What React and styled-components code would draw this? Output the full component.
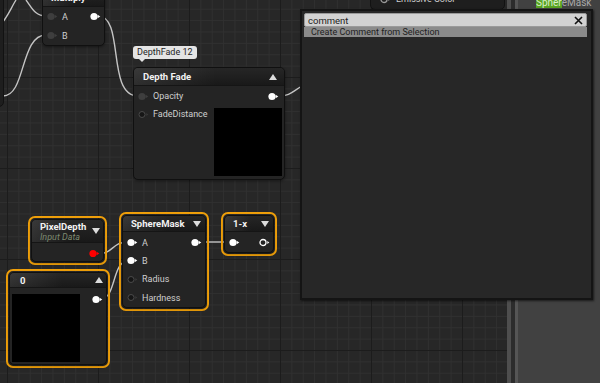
import React from "react";
import styled, { createGlobalStyle } from "styled-components";

const GlobalStyle = createGlobalStyle`
  html, body { margin: 0; padding: 0; background: #272727; overflow: hidden; }
  body { font-family: Roboto, "Liberation Sans", sans-serif; }
`;

const Screen = styled.div`
  position: relative;
  display: flex;
  width: 600px;
  height: 383px;
  overflow: hidden;
`;

const Graph = styled.div`
  position: relative;
  flex: none;
  width: 507px;
  height: 100%;
  overflow: hidden;
  background-color: #272727;
  background-image:
    linear-gradient(to right, #1c1c1c 1px, transparent 1px),
    linear-gradient(to bottom, #1c1c1c 1px, transparent 1px),
    linear-gradient(to right, #303030 1px, transparent 1px),
    linear-gradient(to bottom, #303030 1px, transparent 1px);
  background-size: 91px 91px, 91px 91px, 11.375px 11.375px, 11.375px 11.375px;
  background-position: 7px 77px, 7px 77px, 7px 77px, 7px 77px;
`;

const Splitter = styled.div`
  flex: none;
  width: 11px;
  background: linear-gradient(to right, #4e4e4e 0 4px, #2c2c2c 4px 8px, #555 8px 11px);
`;

const Panel = styled.div`
  flex: 1;
  background: #414141;
  padding-left: 18px;
`;

const PanelItem = styled.div`
  margin-top: -3px;
  font-size: 10px;
  line-height: 12px;
  color: #a8a8a8;
`;

const Match = styled.span`
  background: #58a222;
  color: #d8f0c8;
`;

const Wires = styled.svg`
  position: absolute;
  left: 0;
  top: 0;
  width: 507px;
  height: 383px;
  pointer-events: none;
`;

const NodeFrame = styled.div`
  position: absolute;
  left: ${(p) => p.$x}px;
  top: ${(p) => p.$y}px;
  width: ${(p) => p.$w}px;
  box-sizing: border-box;
  border-radius: 7px;
  padding: ${(p) => (p.$selected ? "1px" : "0")};
  border: ${(p) => (p.$selected ? "2px solid #f0a00a" : "none")};
`;

const NodeBody = styled.div`
  background: #242424;
  border: 1px solid #101010;
  border-radius: 5px;
  overflow: hidden;
  box-shadow: 0 1px 3px rgba(0, 0, 0, 0.45);
`;

const NodeHeader = styled.div`
  display: flex;
  align-items: center;
  justify-content: space-between;
  height: ${(p) => p.$h}px;
  padding: 0 ${(p) => p.$pr || 4}px 0 ${(p) => p.$pl || 8}px;
  background:
    linear-gradient(to right, rgba(255, 255, 255, 0.09), rgba(255, 255, 255, 0) 55%),
    linear-gradient(#262626, #191919);
  border-bottom: 1px solid #151515;
`;

const TitleBlock = styled.div`
  display: flex;
  flex-direction: column;
`;

const Title = styled.div`
  font-size: 9.5px;
  font-weight: bold;
  color: #f2f2f2;
  line-height: 11px;
`;

const Subtitle = styled.div`
  font-size: 9px;
  font-style: italic;
  color: #7d8a70;
  line-height: 10px;
`;

const Body = styled.div`
  display: flex;
  justify-content: space-between;
  padding: ${(p) => p.$pad || "0"};
`;

const PinColumn = styled.div`
  display: flex;
  flex-direction: column;
  align-items: ${(p) => (p.$right ? "flex-end" : "flex-start")};
`;

const PinRow = styled.div`
  display: flex;
  align-items: center;
  gap: 4px;
  height: ${(p) => p.$h || 18.3}px;
  padding: 0 ${(p) => (p.$right ? "3px" : "0")} 0 ${(p) => (p.$right ? "0" : "4px")};
`;

const PinLabel = styled.span`
  font-size: 9px;
  color: #cfcfcf;
  white-space: nowrap;
`;

const Preview = styled.div`
  width: 68px;
  height: 68px;
  background: #000;
  margin-top: ${(p) => p.$mt || 0}px;
`;

const Tooltip = styled.div`
  position: absolute;
  left: 133px;
  top: 46px;
  padding: 0 4px;
  height: 13px;
  line-height: 13px;
  border-radius: 3px;
  background: #e4e4e4;
  color: #1e1e1e;
  font-size: 9px;
  &::after {
    content: "";
    position: absolute;
    left: 6px;
    bottom: -3px;
    border-left: 3px solid transparent;
    border-right: 3px solid transparent;
    border-top: 3px solid #e4e4e4;
  }
`;

const EdgeNode = styled.div`
  position: absolute;
  left: ${(p) => p.$x}px;
  top: ${(p) => p.$y}px;
  width: ${(p) => p.$w}px;
  height: ${(p) => p.$h}px;
  background: #1e1e1e;
  border: 1px solid #121212;
  border-radius: 5px;
  display: flex;
  align-items: flex-end;
  gap: 5px;
  padding: 0 0 ${(p) => p.$pb || 0}px 9px;
  box-sizing: border-box;
`;

const Popup = styled.div`
  position: absolute;
  left: 300px;
  top: 9px;
  width: 293px;
  height: 291px;
  box-sizing: border-box;
  border: 2px solid #141414;
  background: #272727;
  padding: 2px 4px 0 2px;
  box-shadow: 1px 1px 2px rgba(0, 0, 0, 0.6);
  display: flex;
  flex-direction: column;
`;

const SearchBox = styled.div`
  display: flex;
  align-items: center;
  justify-content: space-between;
  height: 12px;
  padding: 0 3px 0 3px;
  background: #d2d2d2;
  border: 1px solid #9a9a9a;
  border-radius: 2px;
  font-size: 9.5px;
  color: #1e1e1e;
`;

const MenuItem = styled.div`
  height: 10px;
  line-height: 10px;
  padding-left: 7px;
  background: #8b8b8b;
  font-size: 9px;
  color: #1e1e1e;
`;

const Pin = ({ kind = "filled", color = "#ffffff" }) => {
  if (kind === "hollow") {
    return (
      <svg width="11" height="9" viewBox="0 0 11 9">
        <circle cx="4" cy="4.5" r="3" fill="#161616" stroke="#4a4a4a" strokeWidth="1" />
        <polygon points="8.3,3 10.3,4.5 8.3,6" fill="#3a3a3a" />
      </svg>
    );
  }
  if (kind === "ring") {
    return (
      <svg width="11" height="9" viewBox="0 0 11 9">
        <circle cx="4" cy="4.5" r="3" fill="none" stroke={color} strokeWidth="1.3" />
        <polygon points="8.3,3 10.3,4.5 8.3,6" fill={color} />
      </svg>
    );
  }
  return (
    <svg width="11" height="9" viewBox="0 0 11 9">
      <circle cx="4" cy="4.5" r="3.6" fill={color} />
      <polygon points="7.6,2.8 10.3,4.5 7.6,6.2" fill={color} />
    </svg>
  );
};

const Arrow = ({ up }) => (
  <svg width="8" height="6" viewBox="0 0 8 6">
    <polygon points={up ? "0,6 8,6 4,0" : "0,0 8,0 4,6"} fill="#dcdcdc" />
  </svg>
);

const Node = ({ x, y, w, selected, children }) => (
  <NodeFrame $x={x} $y={y} $w={w} $selected={selected}>
    <NodeBody>{children}</NodeBody>
  </NodeFrame>
);

const DIM = "#3e3e3e";

export default function App() {
  return (
    <Screen>
      <GlobalStyle />
      <Graph>
        <Wires viewBox="0 0 507 383">
          <g fill="none" stroke="#c4c4c4" strokeWidth="1.4">
            <path d="M0,25 C6,20 11,8 16,0" />
            <path d="M26,0 C32,8 35,16 46,16" />
            <path d="M3,96 C26,96 20,35 46,35" />
            <path d="M98,16 C125,16 106,96 138,96" />
            <path d="M279,96 C290,96 292,92 302,86" />
            <path d="M98,254 C113,254 112,242 128,242" />
            <path d="M101,299 C116,299 112,261 128,261" />
            <path d="M200,242 L230,242" />
          </g>
        </Wires>

        <EdgeNode $x={-100} $y={-20} $w={104} $h={127} />

        <EdgeNode $x={370} $y={-20} $w={135} $h={30} $pb={5}>
          <Pin kind="ring" color="#9a9a9a" />
          <PinLabel>Emissive Color</PinLabel>
        </EdgeNode>

        <Node x={42} y={-12} w={63}>
          <NodeHeader $h={17}>
            <Title>Multiply</Title>
          </NodeHeader>
          <Body>
            <PinColumn>
              <PinRow $h={19}>
                <Pin color={DIM} />
                <PinLabel>A</PinLabel>
              </PinRow>
              <PinRow $h={19}>
                <Pin color={DIM} />
                <PinLabel>B</PinLabel>
              </PinRow>
            </PinColumn>
            <PinColumn $right>
              <PinRow $right $h={19}>
                <Pin />
              </PinRow>
            </PinColumn>
          </Body>
        </Node>

        <Tooltip>DepthFade 12</Tooltip>

        <Node x={133} y={67} w={152}>
          <NodeHeader $h={17} $pl={9} $pr={7}>
            <Title>Depth Fade</Title>
            <Arrow up />
          </NodeHeader>
          <Body $pad="1px 2px 3px 0">
            <PinColumn>
              <PinRow $h={18}>
                <Pin color={DIM} />
                <PinLabel>Opacity</PinLabel>
              </PinRow>
              <PinRow $h={18}>
                <Pin kind="hollow" />
                <PinLabel>FadeDistance</PinLabel>
              </PinRow>
            </PinColumn>
            <PinColumn $right>
              <PinRow $right $h={18}>
                <Pin />
              </PinRow>
              <Preview $mt={3} />
            </PinColumn>
          </Body>
        </Node>

        <Node x={28} y={216} w={79} selected>
          <NodeHeader $h={22} $pr={3}>
            <TitleBlock>
              <Title>PixelDepth</Title>
              <Subtitle>Input Data</Subtitle>
            </TitleBlock>
            <Arrow />
          </NodeHeader>
          <Body $pad="2px 0 0 0">
            <span />
            <PinColumn $right>
              <PinRow $right $h={16}>
                <Pin color="#ff0000" />
              </PinRow>
            </PinColumn>
          </Body>
        </Node>

        <Node x={6} y={269} w={104} selected>
          <NodeHeader $h={14} $pl={10} $pr={3}>
            <Title>0</Title>
            <Arrow up />
          </NodeHeader>
          <Body $pad="6px 0 2px 2px">
            <Preview />
            <PinColumn $right>
              <PinRow $right $h={10}>
                <Pin />
              </PinRow>
            </PinColumn>
          </Body>
        </Node>

        <Node x={119} y={212} w={90} selected>
          <NodeHeader $h={15}>
            <Title>SphereMask</Title>
            <Arrow />
          </NodeHeader>
          <Body $pad="1.5px 0 0 0">
            <PinColumn>
              <PinRow>
                <Pin />
                <PinLabel>A</PinLabel>
              </PinRow>
              <PinRow>
                <Pin />
                <PinLabel>B</PinLabel>
              </PinRow>
              <PinRow>
                <Pin kind="hollow" />
                <PinLabel>Radius</PinLabel>
              </PinRow>
              <PinRow>
                <Pin kind="hollow" />
                <PinLabel>Hardness</PinLabel>
              </PinRow>
            </PinColumn>
            <PinColumn $right>
              <PinRow $right>
                <Pin />
              </PinRow>
            </PinColumn>
          </Body>
        </Node>

        <Node x={221} y={212} w={56} selected>
          <NodeHeader $h={15}>
            <Title>1-x</Title>
            <Arrow />
          </NodeHeader>
          <Body $pad="1px 0 1px 0">
            <PinColumn>
              <PinRow $h={18}>
                <Pin />
              </PinRow>
            </PinColumn>
            <PinColumn $right>
              <PinRow $right $h={18}>
                <Pin kind="ring" />
              </PinRow>
            </PinColumn>
          </Body>
        </Node>
      </Graph>
      <Splitter />
      <Panel>
        <PanelItem>
          <Match>Spher</Match>eMask
        </PanelItem>
      </Panel>

      <Popup>
        <SearchBox>
          <span>comment</span>
          <svg width="9" height="9" viewBox="0 0 9 9">
            <path d="M1,1 L8,8 M8,1 L1,8" stroke="#111" strokeWidth="1.6" />
          </svg>
        </SearchBox>
        <MenuItem>Create Comment from Selection</MenuItem>
      </Popup>
    </Screen>
  );
}
